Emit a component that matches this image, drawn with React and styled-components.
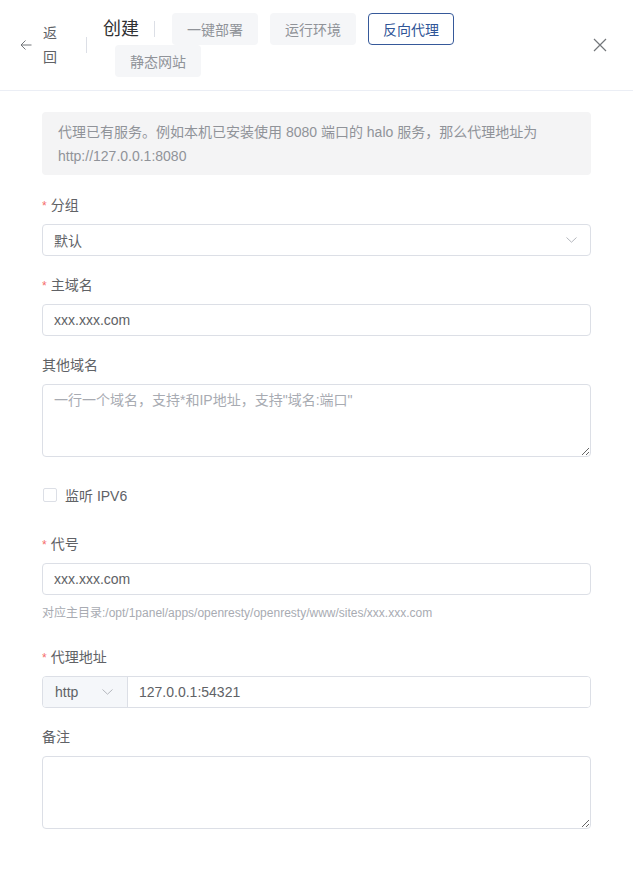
import React from "react";
import styled, { createGlobalStyle } from "styled-components";

const GlobalStyle = createGlobalStyle`
  body {
    margin: 0;
    background: #fff;
    font-family: "Liberation Sans", "Noto Sans CJK SC", sans-serif;
    color: #606266;
  }
  * { box-sizing: border-box; }
`;

const Drawer = styled.div`
  width: 633px;
  min-height: 869px;
  background: #fff;
`;

const Header = styled.div`
  height: 91px;
  display: flex;
  align-items: center;
  padding: 0 26px 0 20px;
  border-bottom: 1px solid #ebeef5;
`;

const Back = styled.div`
  display: flex;
  align-items: center;
  color: #606266;
  cursor: pointer;
  span {
    width: 14px;
    margin-left: 11px;
    font-size: 14px;
    line-height: 24px;
    word-break: break-all;
  }
`;

const Divider = styled.div`
  width: 1px;
  height: 16px;
  background: #dcdfe6;
  margin: ${p => p.$margin};
`;

const HeadContent = styled.div`
  width: 420px;
  display: flex;
  flex-wrap: wrap;
  align-items: center;
`;

const Title = styled.div`
  height: 32px;
  font-size: 18px;
  line-height: 32px;
  color: #303133;
`;

const TabButton = styled.button`
  height: 32px;
  margin-left: 12px;
  padding: 0 14px;
  font-family: inherit;
  font-size: 14px;
  border-radius: 4px;
  cursor: pointer;
  border: 1px solid ${p => (p.$active ? "#36599a" : "transparent")};
  background: ${p => (p.$active ? "#fff" : "#f5f6f8")};
  color: ${p => (p.$active ? "#2f5597" : "#909399")};
`;

const Close = styled.div`
  margin-left: auto;
  display: flex;
  color: #73767a;
  cursor: pointer;
`;

const Body = styled.div`
  padding: 21px 42px 20px;
`;

const Alert = styled.div`
  height: 63px;
  background: #f4f4f5;
  border-radius: 4px;
  padding: 8px 16px 0;
  font-size: 14px;
  line-height: 24px;
  color: #909399;
  margin-bottom: 19px;
  overflow: hidden;
`;

const FormItem = styled.div`
  margin-bottom: 18px;
`;

const Label = styled.div`
  height: 22px;
  font-size: 14px;
  line-height: 22px;
  color: #606266;
  margin-bottom: 8px;
  overflow: hidden;
  &::before {
    content: ${p => (p.$required ? '"*"' : "none")};
    color: #f56c6c;
    margin-right: 4px;
    font-size: 12px;
  }
`;

const Input = styled.input`
  display: block;
  width: 100%;
  height: 32px;
  padding: 0 11px;
  border: 1px solid #dcdfe6;
  border-radius: 4px;
  font-family: inherit;
  font-size: 14px;
  color: #606266;
  outline: none;
  background: #fff;
`;

const SelectBox = styled.div`
  height: 32px;
  display: flex;
  align-items: center;
  justify-content: space-between;
  padding: 0 13px 0 11px;
  border: 1px solid #dcdfe6;
  border-radius: 4px;
  font-size: 14px;
  color: #606266;
`;

const TextArea = styled.textarea`
  display: block;
  width: 100%;
  height: 73px;
  padding: 5px 11px;
  border: 1px solid #dcdfe6;
  border-radius: 4px;
  font-family: inherit;
  font-size: 14px;
  line-height: 1.5;
  color: #606266;
  resize: vertical;
  outline: none;
  &::placeholder {
    color: #a8abb2;
  }
`;

const CheckRow = styled.label`
  height: 40px;
  margin-bottom: 18px;
  display: flex;
  align-items: center;
  font-size: 14px;
  color: #606266;
`;

const CheckBox = styled.span`
  width: 14px;
  height: 14px;
  margin-left: 1px;
  margin-right: 8px;
  border: 1px solid #dcdfe6;
  border-radius: 2px;
  background: #fff;
`;

const Help = styled.div`
  height: 33px;
  font-size: 12px;
  line-height: 20px;
  color: #a8abb2;
  padding-top: 8px;
  overflow: hidden;
  white-space: nowrap;
`;

const Group = styled.div`
  display: flex;
  height: 32px;
  border: 1px solid #dcdfe6;
  border-radius: 4px;
  overflow: hidden;
`;

const Prepend = styled.div`
  width: 85px;
  display: flex;
  align-items: center;
  justify-content: space-between;
  padding: 0 14px 0 12px;
  background: #f5f7fa;
  border-right: 1px solid #dcdfe6;
  font-size: 14px;
  color: #606266;
`;

const GroupInput = styled.input`
  flex: 1;
  border: none;
  outline: none;
  padding: 0 11px;
  font-family: inherit;
  font-size: 14px;
  color: #606266;
`;

const Chevron = () => (
  <svg width="11" height="6" viewBox="0 0 11 6" fill="none">
    <path d="M0.5 0.5L5.5 5.2L10.5 0.5" stroke="#b4b7bd" strokeWidth="1" />
  </svg>
);

const tabs = ["一键部署", "运行环境", "反向代理", "静态网站"];

export default function App() {
  return (
    <Drawer>
      <GlobalStyle />
      <Header>
        <Back>
          <svg width="12" height="12" viewBox="0 0 12 12" fill="none">
            <path d="M11.5 6H1M5.5 1.5L1 6l4.5 4.5" stroke="#73767a" strokeWidth="1" />
          </svg>
          <span>返回</span>
        </Back>
        <Divider $margin="0 16px 0 29px" />
        <HeadContent>
          <Title>创建</Title>
          <Divider $margin="0 5px 0 15px" />
          {tabs.map(t => (
            <TabButton key={t} $active={t === "反向代理"}>{t}</TabButton>
          ))}
        </HeadContent>
        <Close>
          <svg width="14" height="14" viewBox="0 0 14 14" fill="none">
            <path d="M1 1L13 13M13 1L1 13" stroke="#73767a" strokeWidth="1.2" />
          </svg>
        </Close>
      </Header>

      <Body>
        <Alert>
          代理已有服务。例如本机已安装使用 8080 端口的 halo 服务，那么代理地址为 http://127.0.0.1:8080
        </Alert>

        <FormItem>
          <Label $required>分组</Label>
          <SelectBox>
            <span>默认</span>
            <Chevron />
          </SelectBox>
        </FormItem>

        <FormItem>
          <Label $required>主域名</Label>
          <Input defaultValue="xxx.xxx.com" />
        </FormItem>

        <FormItem>
          <Label>其他域名</Label>
          <TextArea placeholder={'一行一个域名，支持*和IP地址，支持"域名:端口"'} />
        </FormItem>

        <CheckRow>
          <CheckBox />
          监听 IPV6
        </CheckRow>

        <FormItem>
          <Label $required>代号</Label>
          <Input defaultValue="xxx.xxx.com" />
          <Help>对应主目录:/opt/1panel/apps/openresty/openresty/www/sites/xxx.xxx.com</Help>
        </FormItem>

        <FormItem>
          <Label $required>代理地址</Label>
          <Group>
            <Prepend>
              <span>http</span>
              <Chevron />
            </Prepend>
            <GroupInput defaultValue="127.0.0.1:54321" />
          </Group>
        </FormItem>

        <FormItem>
          <Label>备注</Label>
          <TextArea />
        </FormItem>
      </Body>
    </Drawer>
  );
}
